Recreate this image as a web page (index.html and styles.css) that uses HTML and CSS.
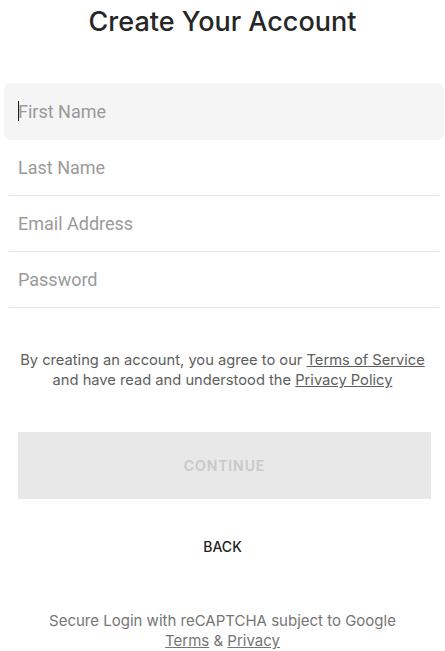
FILE: index.html
```html
<!DOCTYPE html>
<html lang="en">
<head>
    <meta charset="UTF-8">
    <meta name="viewport" content="width=device-width, initial-scale=1.0">
    <title>Create Your Account</title>
    <link rel="stylesheet" href="styles.css">
</head>
<body>
    <div class="page">
        <h1 class="title">Create Your Account</h1>
        <form class="fields">
            <div class="field focused"><input type="text" placeholder="First Name"></div>
            <div class="field"><input type="text" placeholder="Last Name"></div>
            <div class="field"><input type="email" placeholder="Email Address"></div>
            <div class="field"><input type="password" placeholder="Password"></div>
        </form>
        <p class="terms">
            By creating an account, you agree to our <a href="#">Terms of Service</a><br>
            and have read and understood the <a href="#">Privacy Policy</a>
        </p>
        <button class="continue" disabled>CONTINUE</button>
        <button class="back">BACK</button>
        <p class="recaptcha">
            Secure Login with reCAPTCHA subject to Google<br>
            <a href="#">Terms</a> &amp; <a href="#">Privacy</a>
        </p>
    </div>
</body>
</html>
```

FILE: styles.css
```css
body {
    margin: 0;
    background: #fff;
    font-family: Inter, 'Liberation Sans', sans-serif;
    color: #222;
}
.page {
    display: flex;
    flex-direction: column;
}
.title {
    margin: 0;
    padding-top: 4px;
    font-size: 27px;
    font-weight: 500;
    line-height: 36px;
    text-align: center;
    color: #262626;
}
.fields {
    margin: 43px 6px 0 9px;
}
.field {
    position: relative;
    height: 55px;
    border-bottom: 1px solid #e4e4e4;
    display: flex;
    align-items: center;
}
.field input {
    border: none;
    outline: none;
    background: transparent;
    width: 100%;
    padding: 0 9px;
    font-family: Roboto, 'Liberation Sans', sans-serif;
    font-size: 18px;
    color: #333;
}
.field input::placeholder {
    color: #9a9a9a;
}
.field.focused {
    height: 57px;
    margin: 0 -5px;
    background: #f5f5f5;
    border-radius: 6px;
    border-bottom: none;
}
.field.focused input {
    padding-left: 14px;
}
.field.focused::before {
    content: '';
    position: absolute;
    left: 14px;
    top: 18px;
    width: 1px;
    height: 20px;
    background: #222;
}
.terms {
    margin: 42px 0 0;
    font-size: 14.7px;
    line-height: 20px;
    text-align: center;
    color: #5e5e5e;
}
.terms a, .recaptcha a {
    color: inherit;
}
.continue {
    margin: 42px 14px 0 18px;
    height: 67px;
    border: none;
    background: #e8e8e8;
    color: #c9c9c9;
    font-family: inherit;
    font-size: 14px;
    font-weight: 600;
    letter-spacing: 0.9px;
}
.back {
    margin: 38px auto 0;
    border: none;
    background: none;
    padding: 0;
    line-height: 20px;
    font-family: inherit;
    font-size: 14px;
    font-weight: 500;
    color: #222;
}
.recaptcha {
    margin: 54px 0 0;
    font-size: 15px;
    line-height: 20px;
    text-align: center;
    color: #757575;
}
```
